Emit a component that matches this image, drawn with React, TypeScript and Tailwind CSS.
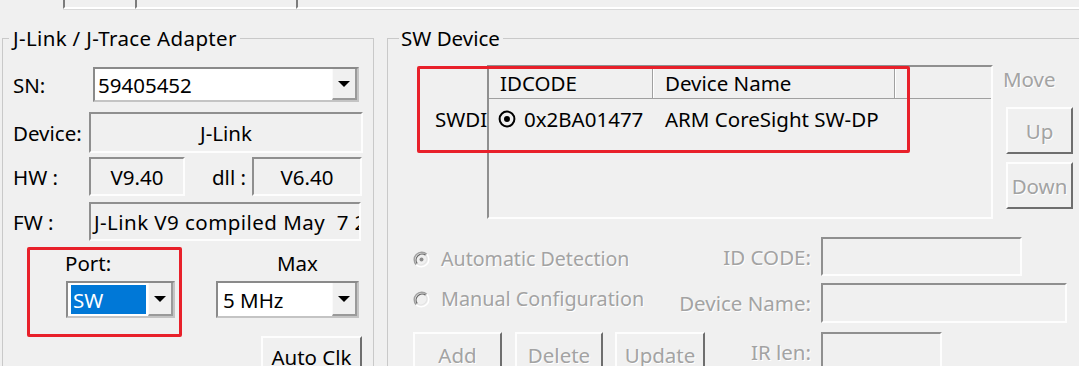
import React from "react";

const sunken =
  "border-2 border-t-[#8f8f8f] border-l-[#8f8f8f] border-b-[#fdfdfd] border-r-[#fdfdfd]";
const comboEdge =
  "border-2 border-t-[#8a8a8a] border-l-[#8a8a8a] border-b-[#c4c4c4] border-r-[#c4c4c4]";
const raised =
  "border-2 border-t-[#fdfdfd] border-l-[#fdfdfd] border-b-[#6e6e6e] border-r-[#6e6e6e]";
const dim = "text-[#a3a3a3] [text-shadow:1px_1px_0_#ffffff]";

type BoxProps = {
  className?: string;
  children?: React.ReactNode;
  disabled?: boolean;
};

const DropArrow = () => (
  <svg width="12" height="6" viewBox="0 0 12 6">
    <path d="M0 0h12L6 6z" fill="#000" />
  </svg>
);

const DropButton = () => (
  <div className="w-[25px] shrink-0 flex items-center justify-center bg-[#f0f0f0] border-l border-l-[#fafafa] border-r-2 border-r-[#9a9a9a] border-b-2 border-b-[#9a9a9a]">
    <DropArrow />
  </div>
);

const Combo = ({ className, children }: BoxProps) => (
  <div className={`flex bg-white ${comboEdge} ${className ?? ""}`}>
    <div className="flex-1 flex items-center min-w-0">{children}</div>
    <DropButton />
  </div>
);

const Field = ({ className, children }: BoxProps) => (
  <div className={`flex items-center bg-[#f0f0f0] ${sunken} ${className ?? ""}`}>
    {children}
  </div>
);

const Btn = ({ className, children, disabled }: BoxProps) => (
  <div
    className={`flex items-center justify-center bg-[#f0f0f0] ${raised} ${
      disabled ? dim : "text-black"
    } ${className ?? ""}`}
  >
    {children}
  </div>
);

const Radio = ({ checked }: { checked?: boolean }) => (
  <svg width="17" height="17" viewBox="0 0 17 17" className="shrink-0">
    <circle cx="8.5" cy="8.5" r="7.5" fill="#f0f0f0" />
    <path d="M3.2 13.8A7.5 7.5 0 0 1 13.8 3.2" stroke="#a0a0a0" strokeWidth="1.4" fill="none" />
    <path d="M13.8 3.2A7.5 7.5 0 0 1 3.2 13.8" stroke="#ffffff" strokeWidth="1.4" fill="none" />
    <path d="M4.3 12.7A6 6 0 0 1 12.7 4.3" stroke="#6a6a6a" strokeWidth="1.3" fill="none" />
    <path d="M12.7 4.3A6 6 0 0 1 4.3 12.7" stroke="#e3e3e3" strokeWidth="1.3" fill="none" />
    {checked && <circle cx="8.5" cy="8.5" r="2" fill="#8c8c8c" />}
  </svg>
);

const TargetIcon = () => (
  <svg width="18" height="18" viewBox="0 0 18 18" className="shrink-0">
    <circle cx="9" cy="9" r="7.4" fill="none" stroke="#000" strokeWidth="2" />
    <circle cx="9" cy="9" r="3" fill="#000" />
  </svg>
);

const TabStrip = () => (
  <div className="flex h-[9px] pl-[63px]">
    <div className="w-[72px] border-l-2 border-l-[#7c7c7c] border-b-2 border-b-white shadow-[0_1px_0_#d9d9d9]" />
    <div className="w-[161px] border-l-2 border-l-[#7c7c7c] border-b-2 border-b-white shadow-[0_1px_0_#d9d9d9]" />
    <div className="flex-1 border-l-2 border-l-[#7c7c7c] border-b-2 border-b-white shadow-[0_1px_0_#d9d9d9]" />
  </div>
);

const AdapterGroup = () => (
  <fieldset className="ml-[2px] w-[372px] h-[400px] shrink-0 border border-[#c9c9c9]">
    <legend className="ml-[6px] pl-[4px] pr-[3px] leading-[26px] tracking-[0.35px]">
      J-Link / J-Trace Adapter
    </legend>
    <div className="pl-[10px] pt-[16px] flex flex-col">
      <div className="flex items-center h-[35px]">
        <span className="w-[80px] shrink-0">SN:</span>
        <Combo className="w-[266px] h-[35px]">
          <span className="pl-[3px]">59405452</span>
        </Combo>
      </div>
      <div className="flex items-center mt-[10px]">
        <span className="w-[76px] shrink-0">Device:</span>
        <Field className="w-[274px] h-[41px] justify-center">J-Link</Field>
      </div>
      <div className="flex items-center mt-[4px]">
        <span className="w-[76px] shrink-0">HW :</span>
        <Field className="w-[96px] h-[39px] justify-center">V9.40</Field>
        <span className="ml-[27px] w-[40px] shrink-0">dll :</span>
        <Field className="w-[110px] h-[39px] justify-center">V6.40</Field>
      </div>
      <div className="flex items-center mt-[6px]">
        <span className="w-[76px] shrink-0">FW :</span>
        <Field className="w-[272px] h-[39px] overflow-hidden pl-[3px] whitespace-pre tracking-[0.45px]">
          J-Link V9 compiled May  7 2020 16:57:25
        </Field>
      </div>
      <div className="flex items-start mt-[6px]">
        <div className="ml-[14px] w-[155px] h-[90px] shrink-0 border-[3px] border-[#e8202a] rounded-[2px] flex flex-col">
          <span className="ml-[35px] mt-[1px]">Port:</span>
          <Combo className="ml-[36px] mt-[6px] w-[109px] h-[37px]">
            <div className="ml-[3px] mr-[2px] my-[2px] flex-1 self-stretch bg-[#0078d7] text-white flex items-center pl-[2px]">
              SW
            </div>
          </Combo>
        </div>
        <div className="ml-[34px] flex flex-col">
          <span className="ml-[61px] mt-[4px]">Max</span>
          <Combo className="mt-[6px] w-[143px] h-[37px]">
            <span className="pl-[5px]">5 MHz</span>
          </Combo>
          <Btn className="ml-[45px] mt-[18px] w-[101px] h-[42px]">Auto Clk</Btn>
        </div>
      </div>
    </div>
  </fieldset>
);

const DeviceList = () => (
  <div className={`w-[506px] h-[154px] shrink-0 bg-[#f0f0f0] flex flex-col ${sunken}`}>
    <div className="flex h-[32px] shrink-0 border-b border-b-[#a0a0a0]">
      <div className="w-[164px] pl-[11px] flex items-center border-r border-r-[#a0a0a0]">
        IDCODE
      </div>
      <div className="w-[242px] pl-[11px] flex items-center border-l border-l-white border-r border-r-[#a0a0a0]">
        Device Name
      </div>
      <div className="flex-1 border-l border-l-white" />
    </div>
    <div className="flex h-[39px] items-center">
      <div className="w-[165px] pl-[9px] flex items-center gap-[8px]">
        <TargetIcon />
        0x2BA01477
      </div>
      <div className="pl-[11px]">ARM CoreSight SW-DP</div>
    </div>
  </div>
);

const DeviceGroup = () => (
  <fieldset className="ml-[13px] w-[720px] h-[400px] shrink-0 border border-[#c9c9c9]">
    <legend className="ml-[11px] pl-[2px] pr-[3px] leading-[26px]">SW Device</legend>
    <div className="relative flex mt-[14px] pl-[47px]">
      <span className="w-[52px] shrink-0 mt-[42px]">SWDI</span>
      <DeviceList />
      <div className="ml-[10px] flex flex-col">
        <span className={`mt-[2px] ${dim}`}>Move</span>
        <Btn disabled className="ml-[3px] mt-[16px] w-[67px] h-[47px]">
          Up
        </Btn>
        <Btn disabled className="ml-[3px] mt-[8px] w-[67px] h-[47px]">
          Down
        </Btn>
      </div>
      <div className="absolute left-[29px] top-[1px] w-[493px] h-[87px] border-[3px] border-[#e8202a] rounded-[2px]" />
    </div>

    <div className="mt-[18px] flex flex-col">
      <div className="flex items-center h-[39px]">
        <div className="w-[272px] shrink-0 pl-[25px] pt-[5px] flex items-center gap-[11px]">
          <Radio checked />
          <span className={`text-[19.6px] ${dim}`}>Automatic Detection</span>
        </div>
        <span className={`w-[151px] shrink-0 text-right ${dim}`}>ID CODE:</span>
        <Field className="ml-[10px] w-[201px] h-[39px]" />
      </div>
      <div className="flex items-center h-[40px] mt-[7px]">
        <div className="w-[272px] shrink-0 pl-[25px] pb-[8px] flex items-center gap-[11px]">
          <Radio />
          <span className={`text-[19.8px] ${dim}`}>Manual Configuration</span>
        </div>
        <span className={`w-[151px] shrink-0 text-right ${dim}`}>Device Name:</span>
        <Field className="ml-[10px] w-[246px] h-[40px]" />
      </div>
      <div className="flex items-start mt-[9px]">
        <div className="w-[272px] shrink-0 pl-[25px] flex">
          <Btn disabled className="w-[89px] h-[46px] shrink-0">
            Add
          </Btn>
          <Btn disabled className="ml-[13px] w-[88px] h-[46px] shrink-0">
            Delete
          </Btn>
          <Btn disabled className="ml-[12px] w-[90px] h-[46px] shrink-0">
            Update
          </Btn>
        </div>
        <span className={`w-[151px] shrink-0 text-right mt-[8px] ${dim}`}>IR len:</span>
        <Field className="ml-[10px] w-[121px] h-[46px]" />
      </div>
    </div>
  </fieldset>
);

export default function App() {
  return (
    <div className="w-[1079px] h-[366px] overflow-hidden bg-[#f0f0f0] text-black font-['Noto_Sans',sans-serif] text-[20.5px] leading-[24px]">
      <TabStrip />
      <div className="flex mt-[16px]">
        <AdapterGroup />
        <DeviceGroup />
      </div>
    </div>
  );
}
